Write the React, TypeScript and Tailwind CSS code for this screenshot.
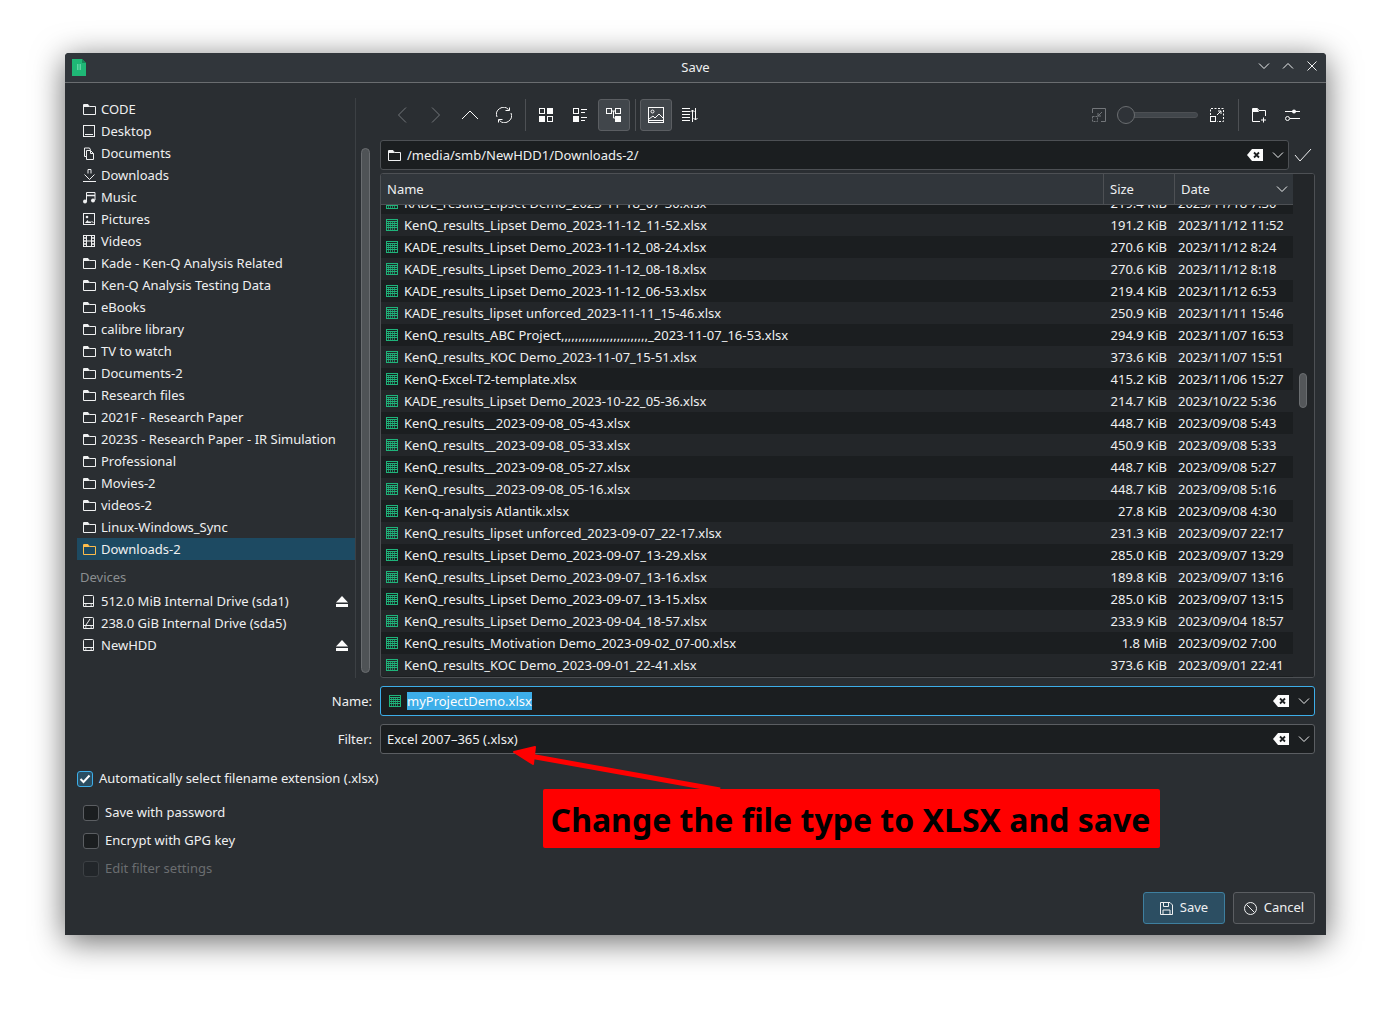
import type { ReactNode } from "react";

const Ico = ({ size = 16, className = "", children }: { size?: number; className?: string; children: ReactNode }) => (
  <svg width={size} height={size} viewBox={`0 0 ${size} ${size}`} fill="none" stroke="currentColor" strokeWidth="1" className={`shrink-0 ${className}`}>
    {children}
  </svg>
);

const FolderIcon = ({ className = "" }: { className?: string }) => (
  <Ico size={13} className={className}>
    <path d="M0.500 11.500v-10h4.500l1.500 2h6v8z" />
    <path d="M1 1.500h4l1.500 2.500H1z" fill="currentColor" stroke="none" />
  </Ico>
);
const DesktopIcon = () => (
  <Ico size={13}>
    <rect x="0.500" y="0.500" width="11" height="11" />
    <path d="M2 9.500h8" />
  </Ico>
);
const DocumentsIcon = () => (
  <Ico size={13}>
    <path d="M3.500 9.500h-2v-8.500h5l1 2" />
    <path d="M3.500 3.500h4l3 3v6h-7z" />
    <path d="M7.500 3.500v3h3" />
  </Ico>
);
const DownloadsIcon = () => (
  <Ico size={13}>
    <path d="M5 4.500V0.500h3v4" />
    <path d="M1.500 5.500l5 5 5-5" />
    <path d="M0 12.500h13" />
  </Ico>
);
const MusicIcon = () => (
  <Ico size={13}>
    <path d="M3.500 10.500V1.500h8.500V9" />
    <path d="M4 4.500h8" strokeWidth="1.500" />
    <circle cx="2" cy="10.500" r="2" fill="currentColor" stroke="none" />
    <circle cx="10" cy="9.500" r="2" fill="currentColor" stroke="none" />
  </Ico>
);
const PicturesIcon = () => (
  <Ico size={13}>
    <rect x="0.500" y="0.500" width="11" height="11" />
    <circle cx="4" cy="4" r="1.300" fill="currentColor" stroke="none" />
    <path d="M2 10l2.500-3 1.500 2 1-1 1.500 2z" fill="currentColor" stroke="none" />
    <path d="M8.500 8l2 2" />
  </Ico>
);
const VideosIcon = () => (
  <Ico size={13}>
    <rect x="0.500" y="0.500" width="11" height="11" />
    <path d="M3.500 1v10M8.500 1v10M3.500 6h5" />
    <path d="M0 3h3M0 6h3M0 9h3M9 3h3M9 6h3M9 9h3" strokeWidth="1.500" />
  </Ico>
);
const DriveIcon = ({ slash = false }: { slash?: boolean }) => (
  <Ico size={13}>
    <path d="M1.500 0.500h8a1 1 0 0 1 1 1v10h-10v-10a1 1 0 0 1 1-1z" />
    {slash ? <path d="M3 8l4-6" /> : null}
    <path d="M1 8.500h9" />
    <path d="M2 10h1.500M7.500 10H9" />
  </Ico>
);
const EjectIcon = () => (
  <svg width="12" height="11" viewBox="0 0 12 11" className="block shrink-0" fill="#fcfcfc">
    <path d="M6 0L12 6.500H0z" />
    <rect y="8" width="12" height="3" />
  </svg>
);
const Chevron = ({ className = "" }: { className?: string }) => (
  <svg width="12" height="8" viewBox="0 0 12 8" fill="none" stroke="currentColor" className={`shrink-0 ${className}`}>
    <path d="M1 1.500l5 5 5-5" />
  </svg>
);
const ClearIcon = () => (
  <svg width="16" height="12" viewBox="0 0 16 12" className="block shrink-0">
    <path d="M5 0h11v12H5L0 6z" fill="#fcfcfc" />
    <path d="M7 3.500l5 5M12 3.500l-5 5" stroke="#1b1e20" strokeWidth="1.800" />
  </svg>
);
const SheetIcon = () => (
  <svg width="12" height="12" viewBox="0 0 12 12" fill="none" stroke="#1fb37a" strokeWidth="1" className="shrink-0">
    <rect x="0.500" y="0.500" width="11" height="11" />
    <path d="M1 2.500h10M1 4.500h10M1 6.500h10M1 8.500h10" />
    <path d="M2.500 3v8M4.500 3v8M6.500 3v8M8.500 3v8" opacity="0.7" />
  </svg>
);

const places = [
  { label: "CODE", icon: <FolderIcon /> },
  { label: "Desktop", icon: <DesktopIcon /> },
  { label: "Documents", icon: <DocumentsIcon /> },
  { label: "Downloads", icon: <DownloadsIcon /> },
  { label: "Music", icon: <MusicIcon /> },
  { label: "Pictures", icon: <PicturesIcon /> },
  { label: "Videos", icon: <VideosIcon /> },
  ...[
    "Kade - Ken-Q Analysis Related",
    "Ken-Q Analysis Testing Data",
    "eBooks",
    "calibre library",
    "TV to watch",
    "Documents-2",
    "Research files",
    "2021F - Research Paper",
    "2023S - Research Paper - IR Simulation",
    "Professional",
    "Movies-2",
    "videos-2",
    "Linux-Windows_Sync",
  ].map((label) => ({ label, icon: <FolderIcon /> })),
];

const devices = [
  { label: "512.0 MiB Internal Drive (sda1)", eject: true, slash: false },
  { label: "238.0 GiB Internal Drive (sda5)", eject: false, slash: true },
  { label: "NewHDD", eject: true, slash: false },
];

const files = [
  ["KADE_results_Lipset Demo_2023-11-18_07-30.xlsx", "219.4 KiB", "2023/11/18 7:30"],
  ["KenQ_results_Lipset Demo_2023-11-12_11-52.xlsx", "191.2 KiB", "2023/11/12 11:52"],
  ["KADE_results_Lipset Demo_2023-11-12_08-24.xlsx", "270.6 KiB", "2023/11/12 8:24"],
  ["KADE_results_Lipset Demo_2023-11-12_08-18.xlsx", "270.6 KiB", "2023/11/12 8:18"],
  ["KADE_results_Lipset Demo_2023-11-12_06-53.xlsx", "219.4 KiB", "2023/11/12 6:53"],
  ["KADE_results_lipset unforced_2023-11-11_15-46.xlsx", "250.9 KiB", "2023/11/11 15:46"],
  ["KenQ_results_ABC Project,,,,,,,,,,,,,,,,,,,,,,,,,_2023-11-07_16-53.xlsx", "294.9 KiB", "2023/11/07 16:53"],
  ["KenQ_results_KOC Demo_2023-11-07_15-51.xlsx", "373.6 KiB", "2023/11/07 15:51"],
  ["KenQ-Excel-T2-template.xlsx", "415.2 KiB", "2023/11/06 15:27"],
  ["KADE_results_Lipset Demo_2023-10-22_05-36.xlsx", "214.7 KiB", "2023/10/22 5:36"],
  ["KenQ_results__2023-09-08_05-43.xlsx", "448.7 KiB", "2023/09/08 5:43"],
  ["KenQ_results__2023-09-08_05-33.xlsx", "450.9 KiB", "2023/09/08 5:33"],
  ["KenQ_results__2023-09-08_05-27.xlsx", "448.7 KiB", "2023/09/08 5:27"],
  ["KenQ_results__2023-09-08_05-16.xlsx", "448.7 KiB", "2023/09/08 5:16"],
  ["Ken-q-analysis Atlantik.xlsx", "27.8 KiB", "2023/09/08 4:30"],
  ["KenQ_results_lipset unforced_2023-09-07_22-17.xlsx", "231.3 KiB", "2023/09/07 22:17"],
  ["KenQ_results_Lipset Demo_2023-09-07_13-29.xlsx", "285.0 KiB", "2023/09/07 13:29"],
  ["KenQ_results_Lipset Demo_2023-09-07_13-16.xlsx", "189.8 KiB", "2023/09/07 13:16"],
  ["KenQ_results_Lipset Demo_2023-09-07_13-15.xlsx", "285.0 KiB", "2023/09/07 13:15"],
  ["KenQ_results_Lipset Demo_2023-09-04_18-57.xlsx", "233.9 KiB", "2023/09/04 18:57"],
  ["KenQ_results_Motivation Demo_2023-09-02_07-00.xlsx", "1.8 MiB", "2023/09/02 7:00"],
  ["KenQ_results_KOC Demo_2023-09-01_22-41.xlsx", "373.6 KiB", "2023/09/01 22:41"],
];

const ToolButton = ({ active = false, children }: { active?: boolean; children: ReactNode }) => (
  <div className={`flex h-8 w-8 items-center justify-center rounded-[3px] border ${active ? "border-[#5b5e62] bg-[#41464b]" : "border-transparent"}`}>
    {children}
  </div>
);

const ToolSep = () => <div className="ml-[3px] mr-[2px] h-8 w-px bg-[#4d5054]" />;

function Toolbar() {
  return (
    <div className="flex h-8 items-center gap-[2px] pl-[6px] pr-[6px] text-[#fcfcfc]">
      <ToolButton>
        <Ico className="text-[#73767a]"><path d="M12 0.500L4.500 8l7.500 7.500" /></Ico>
      </ToolButton>
      <ToolButton>
        <Ico className="text-[#73767a]"><path d="M4 0.500L11.500 8 4 15.500" /></Ico>
      </ToolButton>
      <ToolButton>
        <Ico><path d="M0 12l8-8 8 8" /></Ico>
      </ToolButton>
      <ToolButton>
        <Ico>
          <path d="M1 10A7 7 0 0 1 12.500 2.500" />
          <path d="M15 6A7 7 0 0 1 3.500 13.500" />
          <path d="M9.500 3.500h4v-3M6.500 12.500h-4v3" />
        </Ico>
      </ToolButton>
      <ToolSep />
      <ToolButton>
        <Ico>
          <rect x="1.500" y="1.500" width="5" height="5" />
          <rect x="9" y="1" width="6" height="6" fill="currentColor" stroke="none" />
          <rect x="1" y="9" width="6" height="6" fill="currentColor" stroke="none" />
          <rect x="9.500" y="9.500" width="5" height="5" />
        </Ico>
      </ToolButton>
      <ToolButton>
        <Ico>
          <rect x="1.500" y="1.500" width="5" height="5" />
          <path d="M9 2.500h6M9 5.500h4M9 10.500h6M9 13.500h4" />
          <rect x="1" y="9" width="6" height="6" fill="currentColor" stroke="none" />
        </Ico>
      </ToolButton>
      <ToolButton active>
        <Ico>
          <rect x="0.500" y="1.500" width="5" height="5" />
          <rect x="9.500" y="1.500" width="5" height="5" />
          <path d="M5.500 4h4M7.500 4v7H9" />
          <rect x="9" y="9" width="6" height="6" fill="currentColor" stroke="none" />
        </Ico>
      </ToolButton>
      <ToolSep />
      <ToolButton active>
        <Ico>
          <rect x="0.500" y="0.500" width="15" height="15" />
          <circle cx="4.500" cy="4.500" r="1.500" />
          <path d="M1 12l4-3 2 2 4-4 4 4M1 13.500h14" />
        </Ico>
      </ToolButton>
      <ToolButton>
        <Ico>
          <path d="M0 1.500h8M0 4.500h8M0 7.500h8M0 10.500h8M0 13.500h8" />
          <path d="M10.500 15V3M8.500 5l2-2 2 2M13.500 1v12M11.500 11l2 2 2-2" />
        </Ico>
      </ToolButton>

      <div className="ml-auto flex items-center">
        <Ico className="text-[#73767a]">
          <path d="M1.500 6V1.500h13v13H10" />
          <rect x="1.500" y="9.500" width="5" height="5" strokeDasharray="2 1" />
          <path d="M11 5L7 9M7 6v3h3" />
        </Ico>
        {/* zoom slider */}
        <div className="relative ml-[10px] mr-[11px] flex h-[18px] w-[81px] items-center">
          <div className="h-[6px] w-full rounded-full border border-[#4d5054] bg-[#41464b]" />
          <div className="absolute left-0 h-[18px] w-[18px] rounded-full border border-[#6a6d70] bg-[#2f3338]" />
        </div>
        <Ico>
          <path d="M1.500 8V1.500h13v13H8" strokeDasharray="2 1.500" />
          <rect x="1.500" y="9.500" width="5" height="5" />
          <path d="M8 8l4-4M9 4h3v3" />
        </Ico>
        <div className="ml-[13px] mr-[4px] h-8 w-px bg-[#4d5054]" />
        <ToolButton>
          <Ico>
            <path d="M9 14.500H1.500v-13h5l1.500 2h6.500V9" />
            <path d="M2 2h4.500L8 5H2z" fill="currentColor" stroke="none" />
            <path d="M12.500 10.500v5M10 13h5" />
          </Ico>
        </ToolButton>
        <div className="w-[2px]" />
        <ToolButton>
          <Ico>
            <path d="M0 4.500h15M5 11.500h10" />
            <circle cx="9" cy="4.500" r="2" fill="currentColor" stroke="none" />
            <circle cx="2.500" cy="11.500" r="2" fill="#2a2e32" />
          </Ico>
        </ToolButton>
      </div>
    </div>
  );
}

function Sidebar() {
  return (
    <div className="flex w-[279px] shrink-0 flex-col border-r border-[#3c4044] text-[13px] leading-[22px] text-[#eff0f1]">
      {places.map((p) => (
        <div key={p.label} className="flex h-[22px] items-center gap-[5px] pl-[6px]">
          {p.icon}
          <span>{p.label}</span>
        </div>
      ))}
      <div className="flex h-[22px] items-center gap-[5px] bg-[#1d4a62] pl-[6px]">
        <FolderIcon className="text-[#fdbc4b]" />
        <span>Downloads-2</span>
      </div>
      <div className="mt-[6px] h-[22px] pl-[3px] text-[#8b8e91]">Devices</div>
      <div className="mt-[2px]">
        {devices.map((d) => (
          <div key={d.label} className="flex h-[22px] items-center gap-[5px] pl-[6px] pr-[7px]">
            <DriveIcon slash={d.slash} />
            <span>{d.label}</span>
            {d.eject ? <span className="ml-auto"><EjectIcon /></span> : null}
          </div>
        ))}
      </div>
    </div>
  );
}

function FileTable() {
  return (
    <div className="mt-[3px] flex h-[505px] overflow-hidden rounded-[3px] border border-[#4d5054] bg-[#1b1e20] text-[13px] text-[#eff0f1]">
      <div className="flex w-[912px] shrink-0 flex-col">
        {/* header */}
        <div className="flex h-[31px] shrink-0 items-end border-b border-[#4d5054] bg-[#31363b] leading-[22px]">
          <div className="h-full w-[723px] border-r border-[#4d5054] pl-[6px] pt-[4px]">Name</div>
          <div className="h-full w-[71px] border-r border-[#4d5054] pl-[6px] pt-[4px]">Size</div>
          <div className="flex h-full flex-1 items-center justify-between pl-[6px] pr-[5px]">
            <span>Date</span>
            <Chevron />
          </div>
        </div>
        {/* rows */}
        <div className="min-h-0 flex-1 overflow-hidden">
          <div className="-mt-[13px]">
            {files.map(([name, size, date], i) => (
              <div key={name} className={`flex h-[22px] items-center leading-[22px] ${i % 2 === 1 ? "bg-[#232629]" : "bg-[#1b1e20]"}`}>
                <div className="flex w-[723px] items-center gap-[6px] pl-[5px]">
                  <SheetIcon />
                  <span className="whitespace-nowrap">{name}</span>
                </div>
                <div className="w-[63px] text-right">{size}</div>
                <div className="whitespace-nowrap pl-[11px]">{date}</div>
              </div>
            ))}
          </div>
        </div>
      </div>
      {/* scrollbar */}
      <div className="relative flex-1 border-l border-[#232629] bg-[#232629]">
        <div className="absolute left-[5px] top-[199px] h-[35px] w-[8px] rounded-full border border-[#6a6d70] bg-[#54575a]" />
      </div>
    </div>
  );
}

const ComboField = ({ focused = false, children }: { focused?: boolean; children: ReactNode }) => (
  <div className={`flex h-[30px] w-[935px] items-center rounded-[3px] border bg-[#1b1e20] pr-[4px] text-[13px] leading-[20px] text-[#eff0f1] ${focused ? "border-[#3daee9]" : "border-[#5b5e62]"}`}>
    <div className="flex min-w-0 flex-1 items-center">{children}</div>
    <ClearIcon />
    <Chevron className="ml-[9px] text-[#eff0f1]" />
  </div>
);

const Check = ({ checked = false, dim = false }: { checked?: boolean; dim?: boolean }) => (
  <div className={`flex h-4 w-4 shrink-0 items-center justify-center rounded-[3px] border ${checked ? "border-[#3daee9] bg-[#2a4d61]" : dim ? "border-[#3c4044] bg-[#22262a]" : "border-[#5b5e62] bg-[#1b1e20]"}`}>
    {checked ? (
      <svg width="12" height="12" viewBox="0 0 12 12" fill="none" stroke="#fcfcfc" strokeWidth="2">
        <path d="M1.500 6l3 3 6-6.500" />
      </svg>
    ) : null}
  </div>
);

export default function App() {
  return (
    <div className="relative h-[1012px] w-[1391px] overflow-hidden bg-white pl-[65px] pt-[53px] font-['Noto_Sans',sans-serif]">
      <div className="flex h-[882px] w-[1261px] flex-col overflow-hidden rounded-t-[4px] bg-[#2a2e32] shadow-[0_6px_32px_rgba(0,0,0,0.6)]">
        {/* title bar */}
        <div className="relative flex h-[30px] shrink-0 items-center justify-center border-b border-[#6a6d70] bg-[#31363b] text-[13px] text-[#eff0f1]">
          <svg width="14" height="17" viewBox="0 0 14 17" className="absolute left-[7px] top-[6px]">
            <path d="M0 0h10l4 4v13H0z" fill="#1fb876" />
            <path d="M10 0l4 4h-4z" fill="#148a58" />
            <path d="M5 5h1.500v6H5zM7.500 5H9v6H7.500z" fill="#5fd6a3" />
          </svg>
          <span>Save</span>
          <div className="absolute right-[8px] top-[7px] flex items-center gap-[12px] text-[#eff0f1]">
            <Chevron />
            <Chevron className="rotate-180" />
            <svg width="12" height="12" viewBox="0 0 12 12" stroke="currentColor" fill="none"><path d="M1.500 1.500l9 9M10.500 1.500l-9 9" /></svg>
          </div>
        </div>

        {/* body */}
        <div className="flex flex-1 flex-col pl-[12px] pr-[11px] pt-[15px]">
          <div className="flex h-[580px]">
            <Sidebar />
            {/* places scrollbar */}
            <div className="w-[24px] shrink-0 pl-[5px] pt-[50px] pb-[5px]">
              <div className="h-full w-[9px] rounded-full border border-[#6a6d70] bg-[#4f5356]" />
            </div>
            <div className="flex w-[935px] flex-col">
              <div className="pt-px"><Toolbar /></div>
              {/* location bar */}
              <div className="mt-[9px] flex items-center">
                <div className="flex h-[30px] w-[909px] items-center rounded-[3px] border border-[#4d5054] bg-[#1b1e20] pl-[7px] pr-[4px] text-[13px] leading-[20px] text-[#eff0f1]">
                  <FolderIcon />
                  <span className="ml-[6px]">/media/smb/NewHDD1/Downloads-2/</span>
                  <span className="ml-auto"><ClearIcon /></span>
                  <Chevron className="ml-[9px]" />
                </div>
                <svg width="18" height="14" viewBox="0 0 18 14" fill="none" stroke="#eff0f1" className="ml-[5px]">
                  <path d="M1 7l5 6L17 1" />
                </svg>
              </div>
              <FileTable />
            </div>
          </div>

          {/* name + filter */}
          <div className="mt-[8px] flex flex-col gap-[8px]">
            <div className="flex items-center justify-end gap-[8px]">
              <span className="text-[13px] leading-[20px] text-[#eff0f1]">Name:</span>
              <ComboField focused>
                <span className="ml-[8px]"><SheetIcon /></span>
                <span className="ml-[6px] bg-[#3daee9] leading-[18px] text-[#fcfcfc]">myProjectDemo.xlsx</span>
              </ComboField>
            </div>
            <div className="flex items-center justify-end gap-[8px]">
              <span className="text-[13px] leading-[20px] text-[#eff0f1]">Filter:</span>
              <ComboField>
                <span className="ml-[6px]">Excel 2007–365 (.xlsx)</span>
              </ComboField>
            </div>
          </div>

          {/* options */}
          <div className="mt-[17px] flex h-[16px] items-center gap-[6px] text-[13px] text-[#eff0f1]">
            <Check checked />
            <span>Automatically select filename extension (.xlsx)</span>
          </div>
          <div className="mt-[18px] flex flex-col gap-[12px] pl-[6px] text-[13px] text-[#eff0f1]">
            <div className="flex h-4 items-center gap-[6px]"><Check /><span>Save with password</span></div>
            <div className="flex h-4 items-center gap-[6px]"><Check /><span>Encrypt with GPG key</span></div>
            <div className="flex h-4 items-center gap-[6px] text-[#6a6d70]"><Check dim /><span>Edit filter settings</span></div>
          </div>

          {/* buttons */}
          <div className="mt-[15px] flex justify-end gap-[8px] text-[13px] text-[#eff0f1]">
            <div className="flex h-8 w-[82px] items-center justify-center gap-[7px] rounded-[3px] border border-[#3e7f9f] bg-[#2c4e62]">
              <Ico size={13}>
                <path d="M0.500 0.500h9.500l2.500 2.500v9.500H0.500z" />
                <path d="M3.500 1v3.500h5V1M3 12.500v-4.500h7v4.500" />
              </Ico>
              <span>Save</span>
            </div>
            <div className="flex h-8 w-[82px] items-center justify-center gap-[7px] rounded-[3px] border border-[#5b5e62] bg-[#33373b]">
              <Ico size={13}>
                <circle cx="6.500" cy="6.500" r="6" />
                <path d="M2.500 2.500l8 8" />
              </Ico>
              <span>Cancel</span>
            </div>
          </div>
        </div>
      </div>

      {/* annotation drawn over the screenshot */}
      <svg width="240" height="60" viewBox="0 0 240 60" className="absolute left-[500px] top-[740px]">
        <path d="M14 12L35 7L33 24z" fill="#ff0000" stroke="#ff0000" strokeWidth="2" strokeLinejoin="round" />
        <path d="M30 16L220 50" stroke="#ff0000" strokeWidth="5" />
      </svg>
      <div className="absolute left-[543px] top-[789px] flex h-[59px] w-[617px] items-center justify-center whitespace-nowrap rounded-[2px] bg-[#ff0000] pr-[2px] pt-[2px] text-[32px] font-bold text-black">
        Change the file type to XLSX and save
      </div>
    </div>
  );
}
